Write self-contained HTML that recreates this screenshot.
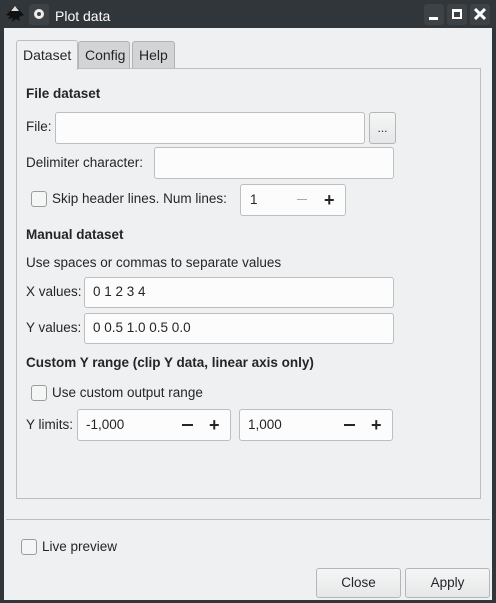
<!DOCTYPE html>
<html><head><style>
*{box-sizing:border-box;margin:0;padding:0}
body{width:496px;height:603px;background:#31363b;position:relative;overflow:hidden;font-family:"Liberation Sans","DejaVu Sans",sans-serif;font-size:13.5px;color:#232629}
.a{position:absolute}
.t{position:absolute;white-space:nowrap;line-height:16px}
.b{font-weight:bold}
.in{position:absolute;background:#fcfcfc;border:1px solid #bcbebf;border-radius:3px}
.cb{position:absolute;width:16px;height:16px;border:1px solid #9a9c9e;border-radius:3px;background:#f4f5f5}
.btn{position:absolute;border:1px solid #b4b6b8;border-radius:3px;background:linear-gradient(#f5f6f6,#e6e7e8);text-align:center}
.pm{position:absolute;font-size:18px;font-weight:bold;line-height:16px}
</style></head><body>
<svg class="a" style="left:4px;top:5px" width="22" height="20" viewBox="0 0 22 20"><path d="M11 1 L2 10 L6 11 L4 14 L9 13 L8 17 L12 14 L16 16 L15 12 L20 10 Z" fill="#111"/><path d="M11 1 L7 6 L15 6 Z" fill="#ddd"/></svg>
<div class="a" style="left:29px;top:4px;width:20px;height:21px;background:#3d4247;border-radius:3px"></div>
<div class="a" style="left:34px;top:9px;width:10px;height:10px;border:3px solid #eee;border-radius:50%"></div>
<div class="t" style="left:55px;top:8px;color:#fcfcfc;font-size:14px">Plot data</div>
<div class="a" style="left:424px;top:4px;width:20px;height:21px;background:#3d4247;border-radius:3px"></div>
<div class="a" style="left:429px;top:17px;width:9px;height:3px;background:#fff"></div>
<div class="a" style="left:447px;top:4px;width:20px;height:21px;background:#3d4247;border-radius:3px"></div>
<div class="a" style="left:452px;top:9px;width:10px;height:10px;border:2px solid #fff;border-top-width:3px"></div>
<div class="a" style="left:470px;top:4px;width:20px;height:21px;background:#3d4247;border-radius:3px"></div>
<svg class="a" style="left:474px;top:8px" width="12" height="12"><path d="M1 1L11 11M11 1L1 11" stroke="#fff" stroke-width="3"/></svg>
<div class="a" style="left:4px;top:28px;width:488px;height:572px;background:#eff0f1"></div>
<div class="a" style="left:78px;top:41px;width:52px;height:28px;background:#d3d4d5;border:1px solid #b0b2b4;border-radius:3px 3px 0 0"></div>
<div class="a" style="left:132px;top:41px;width:43px;height:28px;background:#d3d4d5;border:1px solid #b0b2b4;border-radius:3px 3px 0 0"></div>
<div class="a" style="left:16px;top:68px;width:465px;height:431px;border:1px solid #bcbebf"></div>
<div class="a" style="left:16px;top:40px;width:62px;height:30px;background:#eff0f1;border:1px solid #bcbebf;border-bottom:none;border-radius:3px 3px 0 0"></div>
<div class="t" style="left:23px;top:47px;font-size:14px">Dataset</div>
<div class="t" style="left:85px;top:47px;font-size:14px">Config</div>
<div class="t" style="left:139px;top:47px;font-size:14px">Help</div>
<div class="t b" style="left:26px;top:86px">File dataset</div>
<div class="t" style="left:26px;top:119px">File:</div>
<div class="in" style="left:55px;top:112px;width:310px;height:32px"></div>
<div class="btn" style="left:369px;top:112px;width:27px;height:32px;line-height:30px;font-size:12px">...</div>
<div class="t" style="left:26px;top:155px">Delimiter character:</div>
<div class="in" style="left:154px;top:147px;width:240px;height:32px"></div>
<div class="cb" style="left:31px;top:191px"></div>
<div class="t" style="left:52px;top:191px">Skip header lines. Num lines:</div>
<div class="in" style="left:240px;top:184px;width:106px;height:32px"></div>
<div class="t" style="left:250px;top:192px">1</div>
<div class="a" style="left:297px;top:199px;width:10px;height:1px;background:#aaa"></div>
<div class="pm" style="left:324px;top:192px">+</div>
<div class="t b" style="left:26px;top:227px">Manual dataset</div>
<div class="t" style="left:26px;top:255px">Use spaces or commas to separate values</div>
<div class="t" style="left:26px;top:284px">X values:</div>
<div class="in" style="left:84px;top:277px;width:310px;height:31px"></div>
<div class="t" style="left:93px;top:284px">0 1 2 3 4</div>
<div class="t" style="left:26px;top:320px">Y values:</div>
<div class="in" style="left:84px;top:313px;width:310px;height:31px"></div>
<div class="t" style="left:93px;top:320px">0 0.5 1.0 0.5 0.0</div>
<div class="t b" style="left:26px;top:355px">Custom Y range (clip Y data, linear axis only)</div>
<div class="cb" style="left:31px;top:385px"></div>
<div class="t" style="left:52px;top:385px">Use custom output range</div>
<div class="t" style="left:26px;top:417px">Y limits:</div>
<div class="in" style="left:77px;top:409px;width:154px;height:32px"></div>
<div class="t" style="left:86px;top:417px">-1,000</div>
<div class="a" style="left:182px;top:424px;width:11px;height:2px;background:#232629"></div>
<div class="pm" style="left:209px;top:417px">+</div>
<div class="in" style="left:239px;top:409px;width:154px;height:32px"></div>
<div class="t" style="left:248px;top:417px">1,000</div>
<div class="a" style="left:344px;top:424px;width:11px;height:2px;background:#232629"></div>
<div class="pm" style="left:371px;top:417px">+</div>
<div class="a" style="left:6px;top:519px;width:484px;height:1px;background:#bcbebf"></div>
<div class="cb" style="left:21px;top:539px"></div>
<div class="t" style="left:42px;top:539px">Live preview</div>
<div class="btn" style="left:316px;top:568px;width:85px;height:30px;line-height:28px">Close</div>
<div class="btn" style="left:405px;top:568px;width:85px;height:30px;line-height:28px">Apply</div>
</body></html>
